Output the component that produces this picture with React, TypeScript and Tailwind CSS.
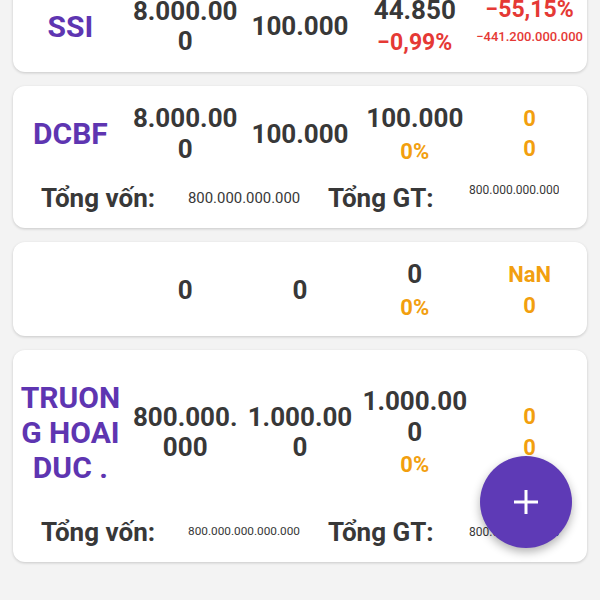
type Sub = { text: string; color: string; size: string; box?: boolean };

type Holding = {
  name: string;
  qty: string;
  cost: string;
  price: string;
  priceSub: Sub;
  pl: Sub;
  plSub: Sub;
  footer?: { capital: string; capitalSize: string; value: string; valueTop?: boolean };
};

const HOLDINGS: Holding[] = [
  {
    name: "SSI",
    qty: "8.000.000",
    cost: "100.000",
    price: "44.850",
    priceSub: { text: "−0,99%", color: "text-[#e53935]", size: "text-[23px]" },
    pl: { text: "−55,15%", color: "text-[#e53935]", size: "text-[23px]" },
    plSub: { text: "−441.200.000.000", color: "text-[#e53935]", size: "text-[13px] font-medium", box: true },
  },
  {
    name: "DCBF",
    qty: "8.000.000",
    cost: "100.000",
    price: "100.000",
    priceSub: { text: "0%", color: "text-[#f29f0f]", size: "text-[22px]" },
    pl: { text: "0", color: "text-[#f29f0f]", size: "text-[22px]" },
    plSub: { text: "0", color: "text-[#f29f0f]", size: "text-[22px]" },
    footer: { capital: "800.000.000.000", capitalSize: "text-[14.9px]", value: "800.000.000.000", valueTop: true },
  },
  {
    name: "",
    qty: "0",
    cost: "0",
    price: "0",
    priceSub: { text: "0%", color: "text-[#f29f0f]", size: "text-[22px]" },
    pl: { text: "NaN", color: "text-[#f29f0f]", size: "text-[22px]" },
    plSub: { text: "0", color: "text-[#f29f0f]", size: "text-[22px]" },
  },
  {
    name: "TRUONG HOAI DUC .",
    qty: "800.000.000",
    cost: "1.000.000",
    price: "1.000.000",
    priceSub: { text: "0%", color: "text-[#f29f0f]", size: "text-[22px]" },
    pl: { text: "0", color: "text-[#f29f0f]", size: "text-[22px]" },
    plSub: { text: "0", color: "text-[#f29f0f]", size: "text-[22px]" },
    footer: { capital: "800.000.000.000.000", capitalSize: "text-[11.8px]", value: "800.000.000.000.000" },
  },
];

function Cell({ children }: { children: React.ReactNode }) {
  return (
    <div className="flex min-w-0 flex-1 flex-col items-center px-1 text-center break-all">
      {children}
    </div>
  );
}

function HoldingCard({ h }: { h: Holding }) {
  return (
    <div className="rounded-[12px] bg-white pt-[17px] pb-[15px] shadow-[0_1px_3px_rgba(0,0,0,0.18)]">
      <div className="flex items-center">
        <Cell>
          <div className="py-[13px] text-[30px] font-bold leading-[1.17] text-[#5e35b1]">{h.name}</div>
        </Cell>
        <Cell>
          <div className="text-[26px] font-bold leading-[1.17] text-[#383838]">{h.qty}</div>
        </Cell>
        <Cell>
          <div className="text-[26px] font-bold leading-[1.17] text-[#383838]">{h.cost}</div>
        </Cell>
        <Cell>
          <div className="text-[26px] font-bold leading-[1.17] text-[#383838]">{h.price}</div>
          <div className={`mt-[5px] font-bold leading-[1.17] ${h.priceSub.size} ${h.priceSub.color}`}>
            {h.priceSub.text}
          </div>
        </Cell>
        <Cell>
          <div className={`font-bold leading-[1.17] ${h.pl.size} ${h.pl.color}`}>{h.pl.text}</div>
          {h.plSub.box ? (
            <div className={`mt-[5px] h-[26px] whitespace-nowrap leading-[1.17] ${h.plSub.size} ${h.plSub.color}`}>
              {h.plSub.text}
            </div>
          ) : (
            <div className={`mt-[5px] font-bold leading-[1.17] ${h.plSub.size} ${h.plSub.color}`}>
              {h.plSub.text}
            </div>
          )}
        </Cell>
      </div>

      {h.footer && (
        <div className="mt-[19px] flex h-[30px] items-center text-[#383838]">
          <div className="ml-[28px] w-[147px] whitespace-nowrap text-[26px] font-bold leading-[1.17]">Tổng vốn:</div>
          <div className={`w-[112px] whitespace-nowrap text-center leading-[1.17] ${h.footer.capitalSize}`}>
            {h.footer.capital}
          </div>
          <div className="ml-[28px] w-[141px] whitespace-nowrap text-[26px] font-bold leading-[1.17]">Tổng GT:</div>
          <div
            className={`w-[90px] overflow-hidden whitespace-nowrap text-[12px] leading-[1.17] ${h.footer.valueTop ? "self-start" : ""}`}
          >
            {h.footer.value}
          </div>
        </div>
      )}
    </div>
  );
}

export default function App() {
  return (
    <div className="relative h-[600px] w-[600px] overflow-hidden bg-[#f3f3f3] font-['Roboto',sans-serif]">
      <div className="-mt-[22px] flex flex-col gap-[14px] px-[13px]">
        {HOLDINGS.map((h, i) => (
          <HoldingCard key={i} h={h} />
        ))}
      </div>

      <button
        type="button"
        aria-label="Add"
        className="absolute left-[480px] top-[456px] flex h-[92px] w-[92px] items-center justify-center rounded-full bg-[#5e3ab6] shadow-[0_4px_10px_rgba(0,0,0,0.3)]"
      >
        <svg width="24" height="24" viewBox="0 0 24 24" aria-hidden>
          <rect x="10.5" y="0" width="3" height="24" fill="white" />
          <rect x="0" y="10.5" width="24" height="3" fill="white" />
        </svg>
      </button>
    </div>
  );
}
